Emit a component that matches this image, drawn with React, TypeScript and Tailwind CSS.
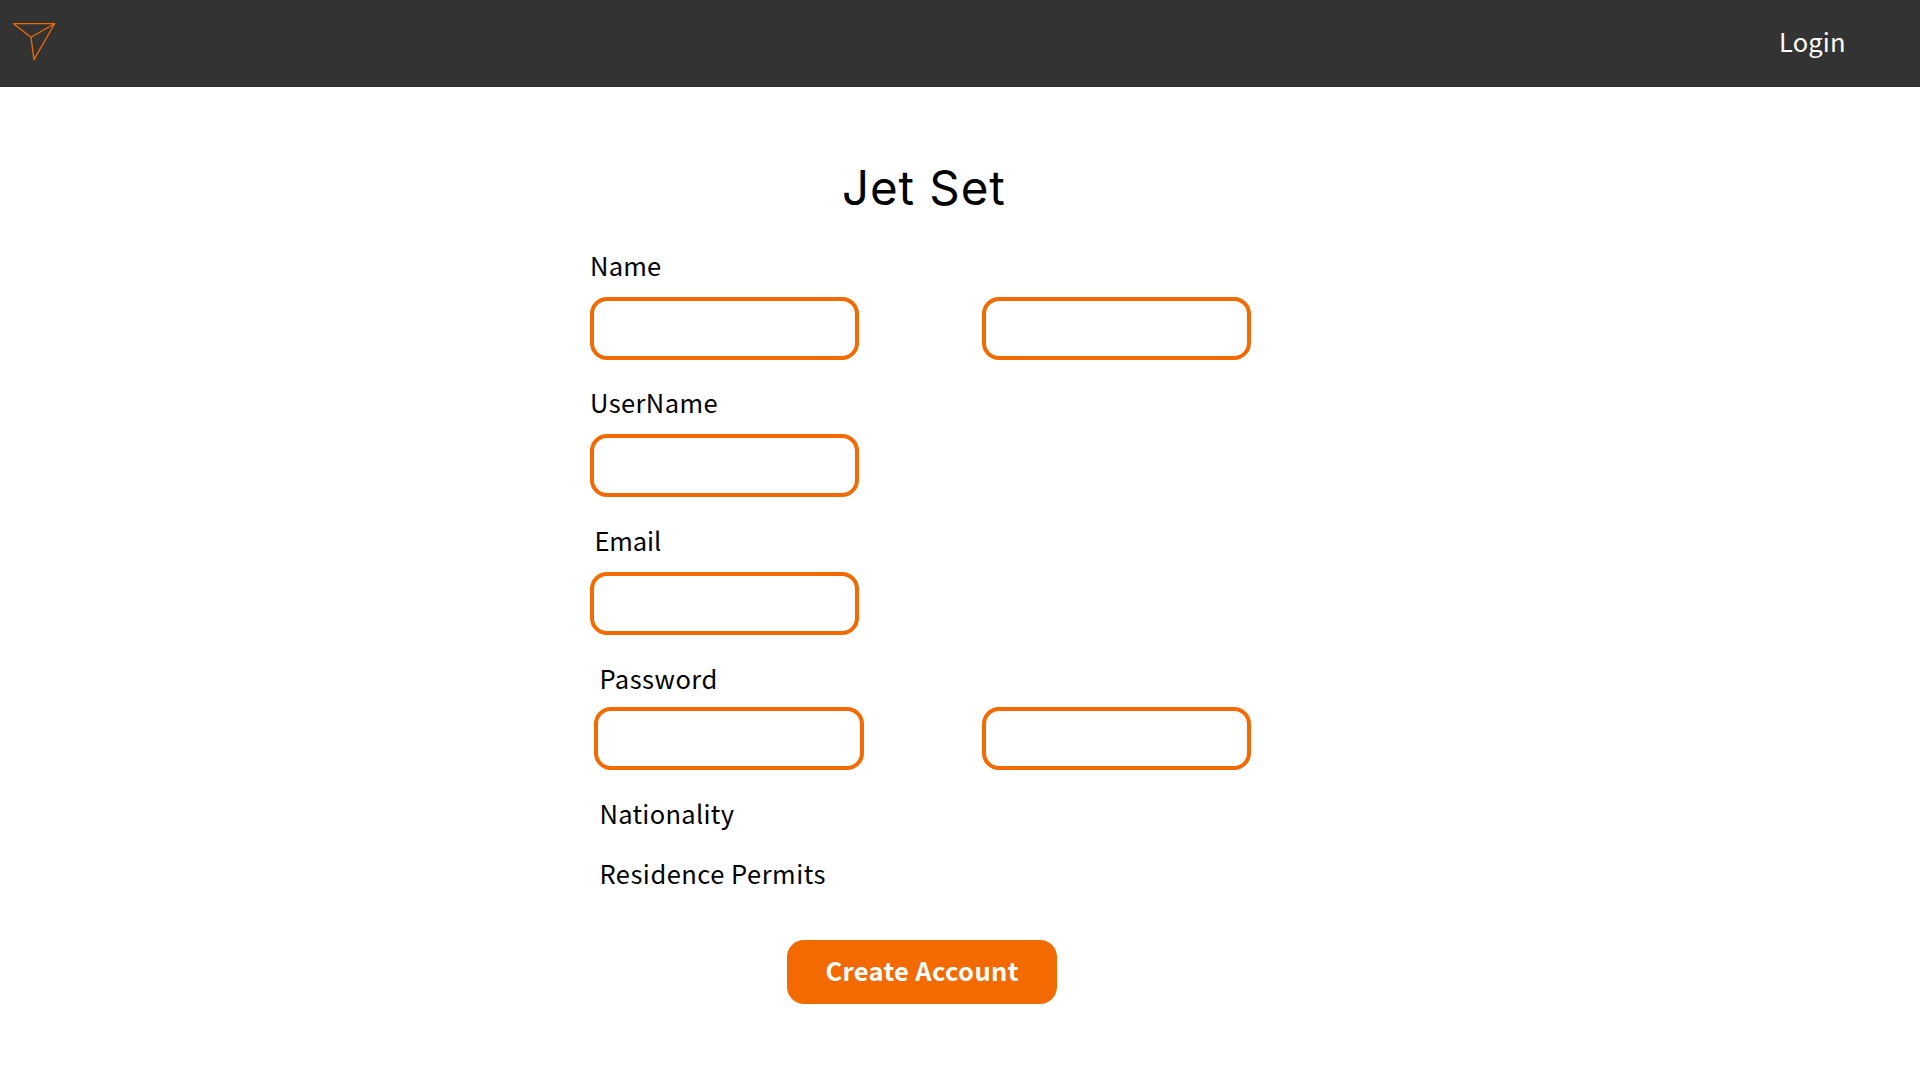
import React from "react";

function Box({ className = "" }: { className?: string }) {
  return (
    <input
      type="text"
      className={`block h-[63px] w-[269.4px] shrink-0 rounded-[17px] border-4 border-[#f36a00] bg-white px-4 outline-none ${className}`}
    />
  );
}

function Label({ children, className = "" }: { children: React.ReactNode; className?: string }) {
  return <label className={`block h-8 text-[25.5px] leading-8 whitespace-nowrap ${className}`}>{children}</label>;
}

export default function App() {
  return (
    <div className="h-[1080px] w-[1920px] overflow-hidden bg-white font-['Noto_Sans_CJK_JP',sans-serif] text-black">
      <header className="flex h-[87px] items-start justify-between bg-[#333333] pr-[75px] pl-3">
        <svg className="mt-5 h-[42px] w-[45px]" viewBox="12 20 45 42" fill="none" stroke="#f36a00" strokeWidth="1.3" strokeLinejoin="round">
          <path d="M13.6 23.7H54.6L34 59.6L31 37.3ZM31 37.3L54.6 23.7" />
        </svg>
        <a className="mt-[25px] w-[66px] text-[25.5px] leading-8 tracking-[0.15px] whitespace-nowrap text-white">Login</a>
      </header>
      <main className="ml-[590px] w-[661.3px] pt-[68px]">
        <h1 className="ml-[252px] h-[60px] font-[Inter,sans-serif] text-[47.5px] leading-[65px] tracking-[0.9px] whitespace-nowrap">Jet Set</h1>
        <form>
          <Label className="mt-[34px] tracking-[0.2px]">Name</Label>
          <div className="mt-[15.5px] flex justify-between">
            <Box />
            <Box />
          </div>
          <Label className="mt-[26.5px] tracking-[0.4px]">UserName</Label>
          <Box className="mt-4" />
          <Label className="mt-[27px] pl-[4.4px] tracking-[-0.1px]">Email</Label>
          <Box className="mt-[15.5px]" />
          <Label className="mt-[27.5px] pl-[9.4px] tracking-[0.5px]">Password</Label>
          <div className="mt-[13px] flex justify-between pl-[4.4px]">
            <Box />
            <Box />
          </div>
          <Label className="mt-[27px] pl-[9.4px] tracking-[0.3px]">Nationality</Label>
          <Label className="mt-7 pl-[9.4px] tracking-[0.5px]">Residence Permits</Label>
          <button
            type="button"
            className="mt-[51px] ml-[197.4px] flex h-[63.5px] w-[269.5px] items-start justify-center rounded-[17px] bg-[#f36a00] pt-[14px] text-[25.5px] leading-8 font-bold tracking-[0.35px] whitespace-nowrap text-white"
          >
            Create Account
          </button>
        </form>
      </main>
    </div>
  );
}
